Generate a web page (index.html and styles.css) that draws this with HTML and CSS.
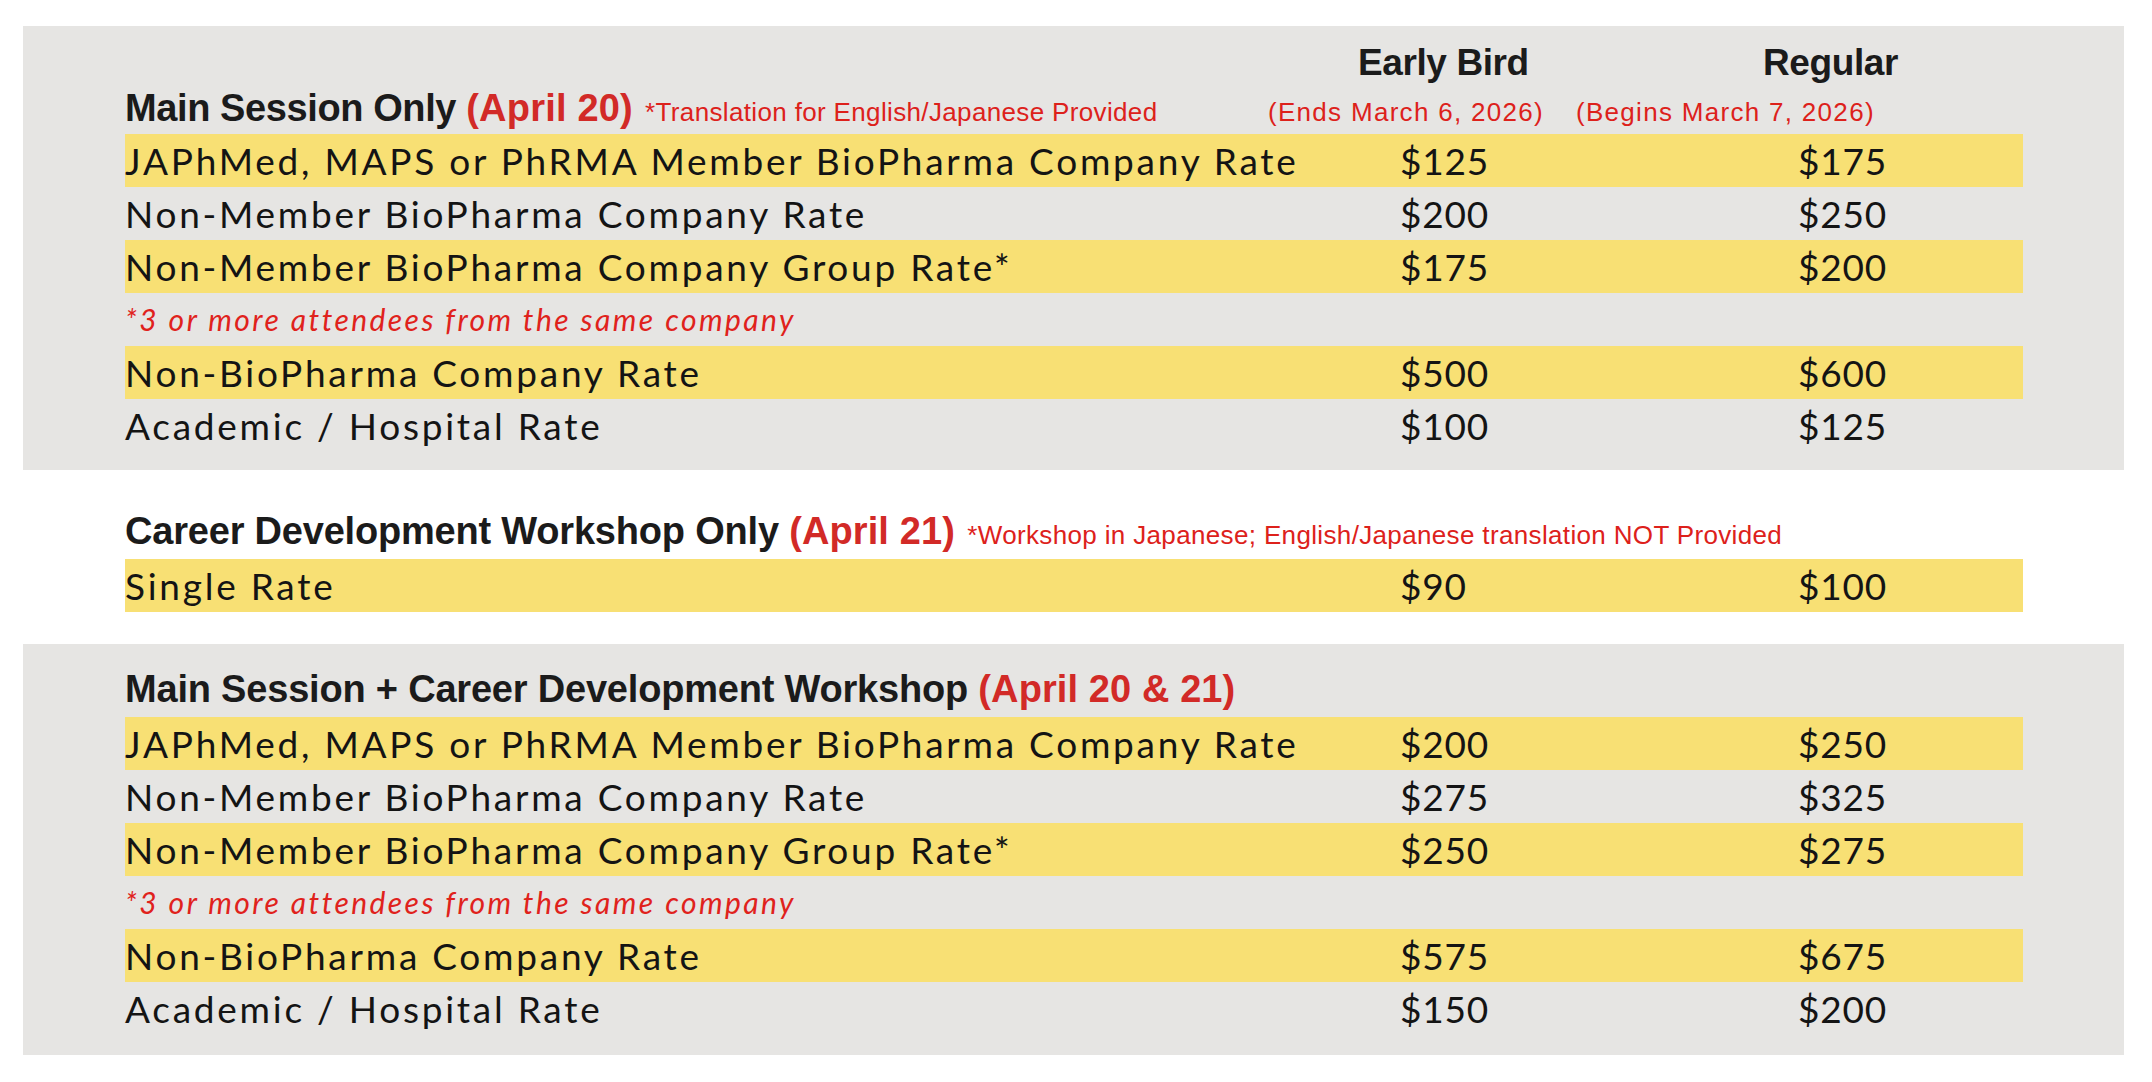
FILE: index.html
```html
<!DOCTYPE html>
<html lang="en">
<head>
<meta charset="utf-8">
<title>Registration Fees</title>
<link rel="stylesheet" href="styles.css">
</head>
<body>
<main class="page">
  <section class="panel panel-first">
    <div class="head-grid">
      <h2 class="heading">Main Session Only <span class="date">(April 20)</span> <span class="note">*Translation for English/Japanese Provided</span></h2>
      <div class="col-head col-early">
        <div class="col-title">Early Bird</div>
        <div class="col-sub">(Ends March 6, 2026)</div>
      </div>
      <div class="col-head col-regular">
        <div class="col-title">Regular</div>
        <div class="col-sub">(Begins March 7, 2026)</div>
      </div>
    </div>
    <div class="rates">
      <div class="row hl"><span class="label">JAPhMed, MAPS or PhRMA Member BioPharma Company Rate</span><span class="price">$125</span><span class="price">$175</span></div>
      <div class="row"><span class="label">Non-Member BioPharma Company Rate</span><span class="price">$200</span><span class="price">$250</span></div>
      <div class="row hl"><span class="label">Non-Member BioPharma Company Group Rate*</span><span class="price">$175</span><span class="price">$200</span></div>
      <div class="row footnote">*3 or more attendees from the same company</div>
      <div class="row hl"><span class="label">Non-BioPharma Company Rate</span><span class="price">$500</span><span class="price">$600</span></div>
      <div class="row"><span class="label">Academic / Hospital Rate</span><span class="price">$100</span><span class="price">$125</span></div>
    </div>
  </section>

  <section class="plain">
    <h2 class="heading">Career Development Workshop Only <span class="date">(April 21)</span> <span class="note">*Workshop in Japanese; English/Japanese translation NOT Provided</span></h2>
    <div class="rates">
      <div class="row hl"><span class="label">Single Rate</span><span class="price">$90</span><span class="price">$100</span></div>
    </div>
  </section>

  <section class="panel panel-last">
    <h2 class="heading">Main Session + Career Development Workshop <span class="date">(April 20 &amp; 21)</span></h2>
    <div class="rates">
      <div class="row hl"><span class="label">JAPhMed, MAPS or PhRMA Member BioPharma Company Rate</span><span class="price">$200</span><span class="price">$250</span></div>
      <div class="row"><span class="label">Non-Member BioPharma Company Rate</span><span class="price">$275</span><span class="price">$325</span></div>
      <div class="row hl"><span class="label">Non-Member BioPharma Company Group Rate*</span><span class="price">$250</span><span class="price">$275</span></div>
      <div class="row footnote">*3 or more attendees from the same company</div>
      <div class="row hl"><span class="label">Non-BioPharma Company Rate</span><span class="price">$575</span><span class="price">$675</span></div>
      <div class="row"><span class="label">Academic / Hospital Rate</span><span class="price">$150</span><span class="price">$200</span></div>
    </div>
  </section>
</main>
</body>
</html>
```

FILE: styles.css
```css
* { box-sizing: border-box; }

html, body {
  margin: 0;
  padding: 0;
  background: #ffffff;
}

body {
  font-family: "Liberation Sans", Arial, sans-serif;
  color: #161616;
}

.page {
  padding: 26px 0 0 23px;
  width: 2124px;
}

.panel {
  background: #e6e5e3;
  padding: 0 101px 0 102px;
}

.panel-first {
  padding-top: 15px;
  padding-bottom: 18px;
}

.panel-last {
  padding-top: 23px;
  padding-bottom: 20px;
}

.plain {
  padding: 39px 101px 32px 102px;
}

.heading {
  margin: 0 0 6px 0;
  font-family: "Liberation Sans", Arial, sans-serif;
  font-weight: 700;
  font-size: 38px;
  line-height: 44px;
  letter-spacing: -0.2px;
  color: #1b1b1b;
  white-space: nowrap;
}

.plain .heading {
  margin-bottom: 6px;
}

.heading .date {
  color: #d22a27;
  letter-spacing: 0.1px;
}

.heading .note {
  font-weight: 400;
  font-size: 26px;
  line-height: 1;
  letter-spacing: 0.35px;
  color: #dd211b;
  margin-left: 2px;
}

.head-grid {
  display: grid;
  grid-template-columns: 1143px 308px 1fr;
  align-items: end;
  margin-bottom: 4px;
}

.head-grid .heading {
  margin: 0;
  letter-spacing: -0.4px;
}

.head-grid .heading .date {
  letter-spacing: 0.2px;
}

.col-head {
  display: flex;
  flex-direction: column;
}

.col-title {
  font-weight: 700;
  font-size: 37px;
  line-height: 44px;
  letter-spacing: -0.4px;
  color: #1b1b1b;
  margin-bottom: 10px;
  white-space: nowrap;
}

.col-early .col-title { padding-left: 90px; }
.col-regular .col-title { padding-left: 187px; }

.col-sub {
  font-size: 26px;
  line-height: 35px;
  letter-spacing: 1.3px;
  color: #dd211b;
  white-space: nowrap;
}

.rates {
  display: flex;
  flex-direction: column;
}

.row {
  display: grid;
  grid-template-columns: 1275px 398px 1fr;
  height: 53px;
  line-height: 53px;
  font-family: "Lato", sans-serif;
  font-size: 37px;
  color: #141414;
  white-space: nowrap;
}

.label {
  letter-spacing: 2.75px;
}

.price {
  letter-spacing: 0.8px;
}

.row.hl {
  background: #f8e074;
}

.row.footnote {
  display: block;
  font-size: 30px;
  font-style: italic;
  letter-spacing: 2.45px;
  color: #e0221c;
}
```
